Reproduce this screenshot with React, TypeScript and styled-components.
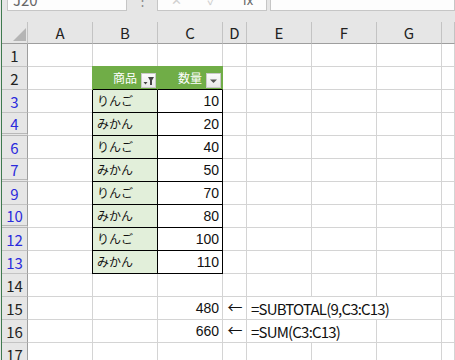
import React from "react";
import styled, { createGlobalStyle, css } from "styled-components";

const GlobalStyle = createGlobalStyle`
  html, body {
    margin: 0;
    padding: 0;
    background: #fff;
    overflow: hidden;
  }
  body {
    font-family: "Noto Sans CJK JP", "Liberation Sans", sans-serif;
  }
`;

const Window = styled.div`
  width: 455px;
  height: 360px;
  overflow: hidden;
  box-sizing: border-box;
  padding-left: 1px;
  background: #e6e6e6;
`;

const Frame = styled.div`
  height: 100%;
  border-left: 1px solid #3f7a4f;
  display: flex;
  flex-direction: column;
`;

// formula bar, mostly scrolled off the top
const Toolbar = styled.div`
  height: 22px;
  flex: none;
  display: flex;
  align-items: flex-start;
  overflow: hidden;
`;

const Field = styled.div<{ $w?: number; $gap?: number }>`
  box-sizing: border-box;
  height: 24px;
  margin-top: -13px;
  margin-left: ${({ $gap }) => $gap ?? 0}px;
  ${({ $w }) =>
    $w
      ? css`
          width: ${$w}px;
          flex: none;
        `
      : css`
          flex: 1;
        `}
  background: #fdfdfd;
  border: 1px solid #c6c6c6;
  display: flex;
  align-items: center;
  font-size: 15px;
  color: #666;
`;

const NameText = styled.span`
  padding-left: 5px;
`;

const Dots = styled.div`
  width: 30px;
  flex: none;
  margin-top: -10px;
  text-align: center;
  font-size: 13px;
  color: #8a8a8a;
`;

const FxIcon = styled.span<{ $dim?: boolean }>`
  flex: 1;
  text-align: center;
  font-size: 13px;
  color: ${({ $dim }) => ($dim ? "#d0d0d0" : "#666")};
`;

const Sheet = styled.div`
  display: grid;
  grid-template-columns: 26px 65px 65px 65px 24px 65px 65px 65px 1fr;
  grid-template-rows: 22px;
  grid-auto-rows: 23px;
  background: #fff;
  font-size: 15px;
  line-height: 1;
`;

const Corner = styled.div`
  box-sizing: border-box;
  background: #e6e6e6;
  border-right: 1px solid #c3c3c3;
  border-bottom: 1px solid #9e9e9e;
  display: flex;
  align-items: flex-end;
  justify-content: flex-end;
  padding: 0 1px 2px 0;
`;

const ColHead = styled.div`
  box-sizing: border-box;
  background: #e6e6e6;
  border-right: 1px solid #c3c3c3;
  border-bottom: 1px solid #9e9e9e;
  display: flex;
  align-items: center;
  justify-content: center;
  color: #222;
`;

const RowHead = styled.div<{ $blue?: boolean; $hiddenNext?: boolean }>`
  box-sizing: border-box;
  background: #e6e6e6;
  border-right: 1px solid #9e9e9e;
  border-bottom: ${({ $hiddenNext }) =>
    $hiddenNext ? "3px double #b8b8b8" : "1px solid #c3c3c3"};
  display: flex;
  align-items: center;
  justify-content: center;
  color: ${({ $blue }) => ($blue ? "#2b2bdc" : "#222")};
`;

type Variant = "th" | "label" | "num";

const Cell = styled.div<{
  $variant?: Variant;
  $first?: boolean;
  $align?: "left" | "right" | "center";
  $span?: number;
}>`
  box-sizing: border-box;
  border-right: 1px solid #d4d4d4;
  border-bottom: 1px solid #d4d4d4;
  padding: 0 3px 0 4px;
  display: flex;
  align-items: center;
  justify-content: ${({ $align }) =>
    $align === "right" ? "flex-end" : $align === "center" ? "center" : "flex-start"};
  white-space: nowrap;
  color: #111;
  ${({ $span }) =>
    $span &&
    css`
      grid-column: span ${$span};
    `}

  ${({ $variant, $first }) =>
    $variant === "th" &&
    css`
      background: #70ad47;
      color: #fff;
      border-right-color: #70ad47;
      border-bottom-color: #000;
      padding-right: 1px;
      gap: 4px;
      box-shadow: ${$first
        ? "-1px 0 0 #70ad47, 0 -1px 0 #70ad47, -1px -1px 0 #70ad47"
        : "0 -1px 0 #70ad47"};
    `}

  ${({ $variant }) =>
    $variant === "label" &&
    css`
      background: #e2efda;
      border-right-color: #000;
      border-bottom-color: #000;
      box-shadow: -1px 0 0 #000;
    `}

  ${({ $variant }) =>
    $variant === "num" &&
    css`
      border-right-color: #000;
      border-bottom-color: #000;
    `}
`;

const Ja = styled.span`
  font-size: 12px;
`;

const Num = styled.span`
  font-family: "Liberation Sans", sans-serif;
  font-size: 14px;
`;

const Formula = styled.span`
  letter-spacing: -0.8px;
`;

const FilterButton = styled.span`
  box-sizing: border-box;
  width: 15px;
  height: 15px;
  flex: none;
  align-self: flex-end;
  margin-bottom: 1px;
  background: linear-gradient(#fbfbfb, #e9e9e9);
  border: 1px solid #c9c9c9;
  display: flex;
  align-items: center;
  justify-content: center;
`;

const Arrow = styled.span`
  font-size: 15px;
  margin-top: -3px;
`;

const Filter: React.FC<{ active?: boolean }> = ({ active }) => (
  <FilterButton>
    <svg width="13" height="13" viewBox="0 0 13 13">
      {active ? (
        <>
          <path d="M1.5 8 H5.5 L3.5 10.5 Z" fill="#444" />
          <path d="M6 3 H12 L10 6.5 V11 H8 V6.5 Z" fill="#444" />
        </>
      ) : (
        <path d="M3 5.5 H10 L6.5 9 Z" fill="#555" />
      )}
    </svg>
  </FilterButton>
);

const items = [
  { n: 3, name: "りんご", qty: 10 },
  { n: 4, name: "みかん", qty: 20, hiddenNext: true },
  { n: 6, name: "りんご", qty: 40 },
  { n: 7, name: "みかん", qty: 50, hiddenNext: true },
  { n: 9, name: "りんご", qty: 70 },
  { n: 10, name: "みかん", qty: 80, hiddenNext: true },
  { n: 12, name: "りんご", qty: 100 },
  { n: 13, name: "みかん", qty: 110 },
];

const columns = ["A", "B", "C", "D", "E", "F", "G", ""];

const blanks = (count: number, key: string) =>
  Array.from({ length: count }, (_, i) => <Cell key={`${key}-${i}`} />);

const App: React.FC = () => {
  return (
    <>
      <GlobalStyle />
      <Window>
        <Frame>
          <Toolbar>
            <Field $w={120} $gap={5}>
              <NameText>J20</NameText>
            </Field>
            <Dots>⋮</Dots>
            <Field $w={110}>
              <FxIcon $dim>✕</FxIcon>
              <FxIcon $dim>✓</FxIcon>
              <FxIcon>fx</FxIcon>
            </Field>
            <Field $gap={3} />
          </Toolbar>

          <Sheet>
            <Corner>
              <svg width="13" height="13" viewBox="0 0 13 13">
                <path d="M13 0 V13 H0 Z" fill="#b5b5b5" />
              </svg>
            </Corner>
            {columns.map((c, i) => (
              <ColHead key={i}>{c}</ColHead>
            ))}

            <RowHead>1</RowHead>
            {blanks(8, "r1")}

            <RowHead>2</RowHead>
            <Cell />
            <Cell $variant="th" $first $align="right">
              <Ja>商品</Ja>
              <Filter active />
            </Cell>
            <Cell $variant="th" $align="right">
              <Ja>数量</Ja>
              <Filter />
            </Cell>
            {blanks(5, "r2")}

            {items.map((it) => (
              <React.Fragment key={it.n}>
                <RowHead $blue $hiddenNext={it.hiddenNext}>
                  {it.n}
                </RowHead>
                <Cell />
                <Cell $variant="label">
                  <Ja>{it.name}</Ja>
                </Cell>
                <Cell $variant="num" $align="right">
                  <Num>{it.qty}</Num>
                </Cell>
                {blanks(5, `r${it.n}`)}
              </React.Fragment>
            ))}

            <RowHead>14</RowHead>
            {blanks(8, "r14")}

            <RowHead>15</RowHead>
            {blanks(2, "r15")}
            <Cell $align="right">
              <Num>480</Num>
            </Cell>
            <Cell $align="center">
              <Arrow>←</Arrow>
            </Cell>
            <Cell $span={3}>
              <Formula>=SUBTOTAL(9,C3:C13)</Formula>
            </Cell>
            <Cell />

            <RowHead>16</RowHead>
            {blanks(2, "r16")}
            <Cell $align="right">
              <Num>660</Num>
            </Cell>
            <Cell $align="center">
              <Arrow>←</Arrow>
            </Cell>
            <Cell $span={2}>
              <Formula>=SUM(C3:C13)</Formula>
            </Cell>
            {blanks(2, "r16b")}

            <RowHead>17</RowHead>
            {blanks(8, "r17")}
          </Sheet>
        </Frame>
      </Window>
    </>
  );
};

export default App;
